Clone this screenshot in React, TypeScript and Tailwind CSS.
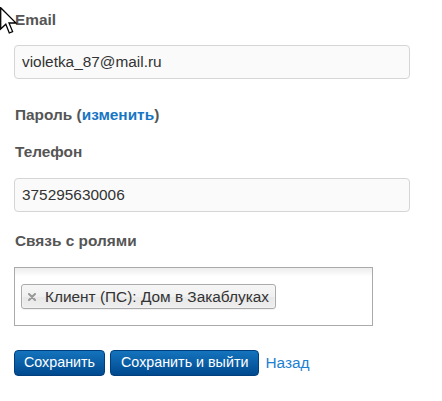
export default function App() {
  return (
    <div className="relative min-h-[401px] w-[442px] bg-white pl-[14px] pt-[10px] font-['Liberation_Sans',Arial,sans-serif] text-[15.4px]">
      {/* mouse pointer */}
      <svg className="pointer-events-none absolute left-0 top-[7px]" width="20" height="30" viewBox="0 0 20 30">
        <path
          d="M0.7 0.7 L0.7 22 L5.8 17.2 L9.3 26 L12.6 24.6 L9 16 L16 16 Z"
          fill="#fff"
          stroke="#000"
          strokeWidth="1.3"
          strokeLinejoin="miter"
        />
      </svg>

      <label className="block pl-px leading-5 font-bold text-[#555]">Email</label>
      <div className="mt-[15px] flex h-[34px] w-[396px] items-center rounded-[4px] border border-[#d5d5d5] bg-[#fafafa] px-[7px] text-[#333]">
        violetka_87@mail.ru
      </div>

      <div className="mt-[26px] pl-px leading-5 font-bold text-[#555]">
        Пароль (<a className="text-[#1776c4]">изменить</a>)
      </div>

      <label className="mt-[17px] block pl-px leading-5 font-bold text-[#555]">Телефон</label>
      <div className="mt-[16px] flex h-[34px] w-[396px] items-center rounded-[4px] border border-[#d5d5d5] bg-[#fafafa] px-[7px] text-[#333]">
        375295630006
      </div>

      <label className="mt-[19px] block pl-px leading-5 font-bold text-[#555]">Связь с ролями</label>
      <div className="mt-[16px] flex h-[59px] w-[359px] items-center border border-[#aaa] bg-[linear-gradient(to_bottom,#eee_1%,#fff_15%)] pl-[6px]">
        <span className="flex h-[25px] items-center rounded-[3px] border border-[#aaa] bg-[linear-gradient(to_bottom,#f4f4f4_20%,#f0f0f0_50%,#e8e8e8_52%,#eee_100%)] pl-[6px] pr-[6px] text-[#333] shadow-[inset_0_0_2px_#fff,0_1px_0_rgba(0,0,0,0.05)]">
          <svg className="mr-[9px]" width="8" height="8" viewBox="0 0 8 8">
            <path d="M1 1 L7 7 M7 1 L1 7" stroke="#999" strokeWidth="2" strokeLinecap="round" />
          </svg>
          Клиент (ПС): Дом в Закаблуках
        </span>
      </div>

      <div className="mt-[24px] flex items-center">
        <button className="h-[26px] rounded-[4px] border border-[#003f7e] bg-[linear-gradient(to_bottom,#1474bd,#00498f)] px-[9px] text-[14.3px] text-white">
          Сохранить
        </button>
        <button className="ml-[5px] h-[26px] rounded-[4px] border border-[#003f7e] bg-[linear-gradient(to_bottom,#1474bd,#00498f)] px-[10px] text-[14.3px] text-white">
          Сохранить и выйти
        </button>
        <a className="ml-[6px] text-[#1e80d0]">Назад</a>
      </div>
    </div>
  )
}
